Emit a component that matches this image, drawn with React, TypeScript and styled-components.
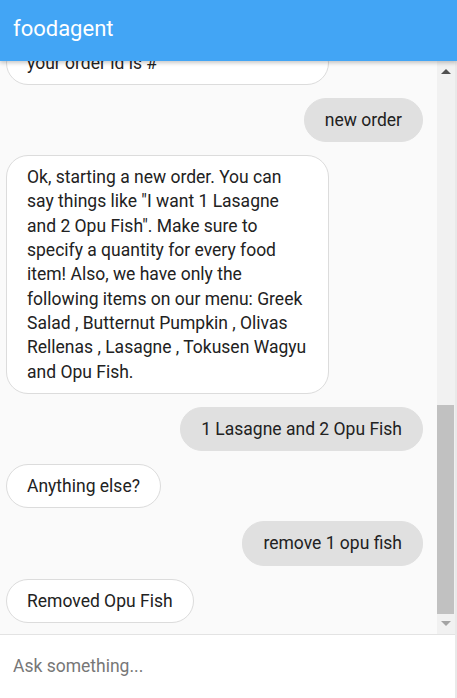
import React from "react";
import styled, { createGlobalStyle } from "styled-components";

const FONT = `Roboto, "Noto Sans", "Liberation Sans", Arial, sans-serif`;

const GlobalStyle = createGlobalStyle`
  html, body { margin: 0; padding: 0; height: 100%; }
  body {
    font-family: ${FONT};
    background: #fafafa;
    overflow: hidden;
  }
  #root { height: 100%; }
  * { box-sizing: border-box; }
`;

const Page = styled.div`
  height: 100%;
  display: flex;
  flex-direction: column;
`;

const Header = styled.header`
  position: relative;
  z-index: 1;
  flex: 0 0 61px;
  display: flex;
  align-items: center;
  padding: 0 13px 4px;
  background: #42a5f5;
  color: #ffffff;
  font-size: 22px;
  box-shadow: 0 2px 4px rgba(0, 0, 0, 0.22);
`;

const Body = styled.div`
  flex: 1;
  min-height: 0;
  display: flex;
  flex-direction: column;
  border-right: 2px solid #e9e9e9;
`;

const ChatRow = styled.div`
  flex: 1;
  min-height: 0;
  display: flex;
`;

const Chat = styled.div`
  flex: 1;
  min-width: 0;
  overflow: hidden;
  background: #fafafa;
  display: flex;
  flex-direction: column;
  justify-content: flex-end;
  gap: 13px;
  padding: 12px 14px 11px 6px;
`;

const ScrollBar = styled.div`
  flex: 0 0 18px;
  display: flex;
  flex-direction: column;
  background: #f1f1f1;
`;

const ScrollButton = styled.div<{ $dir: "up" | "down" }>`
  flex: 0 0 17px;
  display: flex;
  align-items: center;
  justify-content: center;
  padding: ${(p) => (p.$dir === "up" ? "4px 1px 0 0" : "0 1px 4px 0")};

  &::before {
    content: "";
    width: 0;
    height: 0;
    border-left: 5px solid transparent;
    border-right: 5px solid transparent;
    ${(p) =>
      p.$dir === "up"
        ? "border-bottom: 5px solid #505050;"
        : "border-top: 5px solid #a3a3a3;"}
  }
`;

const Track = styled.div`
  flex: 1;
  display: flex;
  flex-direction: column;
  justify-content: flex-end;
  padding: 0 1px 3px 0;
`;

const Thumb = styled.div`
  height: 209px;
  background: #c1c1c1;
`;

type From = "bot" | "user";

const Bubble = styled.div<{ $from: From; $wide?: boolean }>`
  flex-shrink: 0;
  max-width: 323px;
  ${(p) => (p.$wide ? "width: 323px;" : "")}
  padding: 9px 20px;
  border: 1px solid ${(p) => (p.$from === "user" ? "#e0e0e0" : "#dcdcdc")};
  border-radius: 22px;
  background: ${(p) => (p.$from === "user" ? "#e0e0e0" : "#ffffff")};
  align-self: ${(p) => (p.$from === "user" ? "flex-end" : "flex-start")};
  font-size: 17.5px;
  line-height: 24.3px;
  color: #222222;
`;

const InputBar = styled.div`
  flex: 0 0 64px;
  display: flex;
  border-top: 1px solid #e3e3e3;
  background: #ffffff;
`;

const Input = styled.input`
  flex: 1;
  border: none;
  outline: none;
  background: transparent;
  padding: 0 13px 2px;
  font-family: ${FONT};
  font-size: 17.5px;
  color: #222222;
  &::placeholder {
    color: #777777;
  }
`;

type Msg = { from: From; text: string; wide?: boolean };

const messages: Msg[] = [
  { from: "bot", text: "your order id is #", wide: true },
  { from: "user", text: "new order" },
  {
    from: "bot",
    text: "Ok, starting a new order. You can say things like \"I want 1 Lasagne and 2 Opu Fish\". Make sure to specify a quantity for every food item! Also, we have only the following items on our menu: Greek Salad , Butternut Pumpkin , Olivas Rellenas , Lasagne , Tokusen Wagyu and Opu Fish.",
  },
  { from: "user", text: "1 Lasagne and 2 Opu Fish" },
  { from: "bot", text: "Anything else?" },
  { from: "user", text: "remove 1 opu fish" },
  { from: "bot", text: "Removed Opu Fish" },
];

export default function App() {
  return (
    <>
      <GlobalStyle />
      <Page>
        <Header>foodagent</Header>
        <Body>
          <ChatRow>
            <Chat>
              {messages.map((m, i) => (
                <Bubble key={i} $from={m.from} $wide={m.wide}>
                  {m.text}
                </Bubble>
              ))}
            </Chat>
            <ScrollBar>
              <ScrollButton $dir="up" />
              <Track>
                <Thumb />
              </Track>
              <ScrollButton $dir="down" />
            </ScrollBar>
          </ChatRow>
          <InputBar>
            <Input placeholder="Ask something..." />
          </InputBar>
        </Body>
      </Page>
    </>
  );
}
